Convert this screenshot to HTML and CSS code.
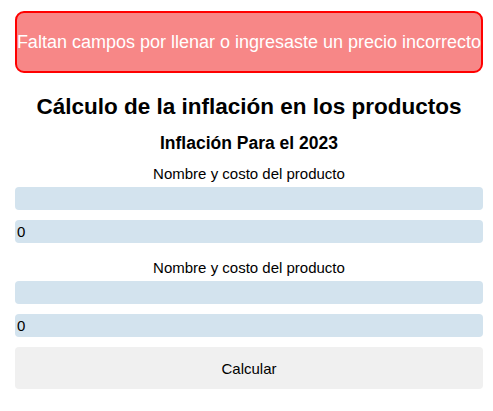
FILE: index.html
```html
<!DOCTYPE html>
<html lang="es">
<head>
<meta charset="utf-8">
<title>Inflación</title>
<link rel="stylesheet" href="styles.css">
</head>
<body>
<main class="page">
  <div class="alert">Faltan campos por llenar o ingresaste un precio incorrecto</div>
  <h1 class="title">Cálculo de la inflación en los productos</h1>
  <h2 class="subtitle">Inflación Para el 2023</h2>
  <form class="form">
    <section class="product">
      <label class="label">Nombre y costo del producto</label>
      <input class="field" type="text" value="">
      <input class="field" type="text" value="0">
    </section>
    <section class="product">
      <label class="label">Nombre y costo del producto</label>
      <input class="field" type="text" value="">
      <input class="field" type="text" value="0">
    </section>
    <button class="btn" type="button">Calcular</button>
  </form>
</main>
</body>
</html>
```
FILE: styles.css
```css
* { box-sizing: border-box; }
html, body { margin: 0; padding: 0; background: #fff; }
body { font-family: "Liberation Sans", Arial, sans-serif; color: #000; }
.page { padding: 11px 10px 0 15px; display: flex; flex-direction: column; }
.alert {
  height: 62px;
  border: 2px solid #ff0000;
  border-radius: 9px;
  background: #f78787;
  color: #fff;
  font-size: 18px;
  display: flex;
  align-items: center;
  justify-content: center;
  white-space: nowrap;
}
.title { margin: 21px 0 0; font-size: 22.5px; line-height: 26px; text-align: center; font-weight: bold; }
.subtitle { margin: 13px 0 0; font-size: 17.5px; line-height: 20px; text-align: center; font-weight: bold; }
.form { display: flex; flex-direction: column; }
.product { display: flex; flex-direction: column; }
.label { display: block; text-align: center; font-size: 15px; line-height: 17px; margin: 12px 0 5px; }
.product + .product .label { margin-top: 6px; }
.field {
  height: 23px;
  border: 0;
  border-radius: 4px;
  background: #d3e3ee;
  font-family: "Liberation Sans", Arial, sans-serif;
  font-size: 15px;
  color: #000;
  padding: 0 2px;
  margin-bottom: 10px;
}
.btn {
  height: 42px;
  border: 0;
  border-radius: 4px;
  background: #f0f0f0;
  font-family: "Liberation Sans", Arial, sans-serif;
  font-size: 15px;
  color: #000;
}
```
